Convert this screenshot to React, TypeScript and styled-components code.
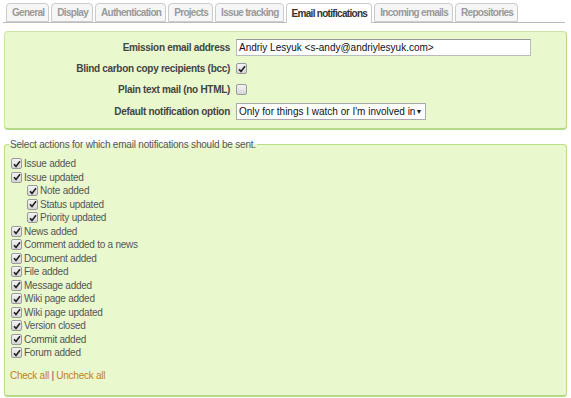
import React from "react";
import styled, { createGlobalStyle } from "styled-components";

const GlobalStyle = createGlobalStyle`
  html, body {
    margin: 0;
    padding: 0;
    background: #fff;
  }
  body {
    font-family: "Liberation Sans", Arial, sans-serif;
    font-size: 10px;
    color: #484848;
  }
`;

const Page = styled.div`
  width: 571px;
  height: 398px;
  padding: 3px 4px 0 4px;
  box-sizing: border-box;
`;

const TabBar = styled.ul`
  display: flex;
  gap: 2px;
  margin: 0 2px 0 -1px;
  padding: 0 0 0 3px;
  list-style: none;
  height: 19px;
  border-bottom: 1px solid #bbb;
`;

const Tab = styled.li<{ $active?: boolean }>`
  box-sizing: border-box;
  height: ${(p) => (p.$active ? "20px" : "19px")};
  padding: 0 4px 0 5px;
  display: flex;
  align-items: center;
  border: 1px solid #ccc;
  border-bottom: ${(p) => (p.$active ? "none" : "1px solid #ccc")};
  border-radius: 4px 4px 0 0;
  background: ${(p) => (p.$active ? "#fff" : "#f6f6f6")};
  color: ${(p) => (p.$active ? "#333" : "#999")};
  font-weight: bold;
  font-size: 10px;
  letter-spacing: -0.7px;
  white-space: nowrap;
`;

const Box = styled.div`
  margin-top: 8px;
  background: #eaf8cd;
  border: 1px solid #c9e6a3;
  border-right-color: #b5d987;
  border-bottom: 2px solid #b5d987;
  border-radius: 4px;
  padding: 5px 0 5px 0;
  display: flex;
  flex-direction: column;
`;

const FormRow = styled.div<{ $h: number }>`
  display: grid;
  grid-template-columns: 225px 1fr;
  column-gap: 6px;
  align-items: center;
  height: ${(p) => p.$h}px;
`;

const Label = styled.label`
  text-align: right;
  font-weight: bold;
  color: #444;
  font-size: 10px;
  letter-spacing: -0.3px;
`;

const TextInput = styled.div`
  width: 295px;
  height: 17px;
  box-sizing: border-box;
  background: #fff;
  border: 1px solid #bbb;
  border-top-color: #999;
  font-size: 10px;
  color: #111;
  padding: 0 2px;
  line-height: 15px;
  white-space: nowrap;
`;

const Select = styled.div`
  width: 190px;
  height: 17px;
  box-sizing: border-box;
  background: #fff;
  border: 1px solid #aaa;
  font-size: 10px;
  color: #111;
  padding: 0 4px 0 2px;
  line-height: 15px;
  display: flex;
  justify-content: space-between;
  align-items: center;
  white-space: nowrap;
`;

const Arrow = styled.span`
  font-size: 7px;
  color: #222;
`;

const CheckBox = styled.span<{ $on?: boolean }>`
  display: inline-flex;
  align-items: center;
  justify-content: center;
  width: 9px;
  height: 9px;
  border: 1px solid #9a9a9a;
  border-radius: 2px;
  background: linear-gradient(#f4f4f4, #d6d6d6);
  flex: none;
  svg {
    display: ${(p) => (p.$on ? "block" : "none")};
  }
`;

const Fieldset = styled.fieldset`
  margin: 9px 0 0 0;
  padding: 7px 0 0 6px;
  background: #eaf8cd;
  border: 1px solid #b9dd88;
  border-bottom: 2px solid #b5d987;
  border-radius: 4px;
  height: 258px;
  box-sizing: border-box;
`;

const Legend = styled.legend`
  padding: 0 1px;
  margin-left: -2px;
  color: #555;
  font-size: 10px;
  letter-spacing: -0.2px;
`;

const ItemList = styled.div`
  display: flex;
  flex-direction: column;
`;

const Item = styled.label<{ $indent?: boolean }>`
  display: flex;
  align-items: center;
  gap: 2px;
  height: 13.5px;
  padding-left: ${(p) => (p.$indent ? "16px" : "0")};
  color: #555;
  font-size: 10px;
  letter-spacing: -0.25px;
`;

const Links = styled.p`
  margin: 10px 0 0 -1px;
  font-size: 10px;
  letter-spacing: -0.25px;
  color: #555;
`;

const Link = styled.a`
  color: #c27f1a;
  text-decoration: none;
`;

const Tick = () => (
  <svg width="8" height="8" viewBox="0 0 8 8">
    <path d="M1 4.2 L3 6.4 L7 1.2" stroke="#222" strokeWidth="1.6" fill="none" />
  </svg>
);

const Check = ({ on = true }: { on?: boolean }) => (
  <CheckBox $on={on}>
    <Tick />
  </CheckBox>
);

const tabs = [
  "General",
  "Display",
  "Authentication",
  "Projects",
  "Issue tracking",
  "Email notifications",
  "Incoming emails",
  "Repositories",
];

const actions: [string, boolean][] = [
  ["Issue added", false],
  ["Issue updated", false],
  ["Note added", true],
  ["Status updated", true],
  ["Priority updated", true],
  ["News added", false],
  ["Comment added to a news", false],
  ["Document added", false],
  ["File added", false],
  ["Message added", false],
  ["Wiki page added", false],
  ["Wiki page updated", false],
  ["Version closed", false],
  ["Commit added", false],
  ["Forum added", false],
];

export default function App() {
  return (
    <Page>
      <GlobalStyle />
      <TabBar>
        {tabs.map((t) => (
          <Tab key={t} $active={t === "Email notifications"}>
            {t}
          </Tab>
        ))}
      </TabBar>

      <Box>
        <FormRow $h={21}>
          <Label>Emission email address</Label>
          <TextInput>Andriy Lesyuk &lt;s-andy@andriylesyuk.com&gt;</TextInput>
        </FormRow>
        <FormRow $h={21}>
          <Label>Blind carbon copy recipients (bcc)</Label>
          <Check />
        </FormRow>
        <FormRow $h={21}>
          <Label>Plain text mail (no HTML)</Label>
          <Check on={false} />
        </FormRow>
        <FormRow $h={23}>
          <Label>Default notification option</Label>
          <Select>
            Only for things I watch or I'm involved in
            <Arrow>▼</Arrow>
          </Select>
        </FormRow>
      </Box>

      <Fieldset>
        <Legend>Select actions for which email notifications should be sent.</Legend>
        <ItemList>
          {actions.map(([name, indent]) => (
            <Item key={name} $indent={indent}>
              <Check />
              {name}
            </Item>
          ))}
        </ItemList>
        <Links>
          <Link href="#">Check all</Link> | <Link href="#">Uncheck all</Link>
        </Links>
      </Fieldset>
    </Page>
  );
}
